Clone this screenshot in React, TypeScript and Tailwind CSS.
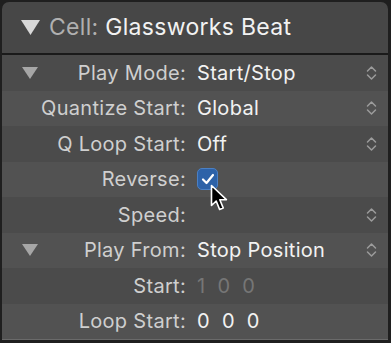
import React from 'react';

type Row = {
  label: string;
  value?: React.ReactNode;
  disclosure?: boolean;
  stepper?: boolean;
};

function Stepper() {
  return (
    <svg width="11" height="16" viewBox="0 0 11 16" className="shrink-0">
      <path d="M1.5 6 L5.5 2 L9.5 6" fill="none" stroke="#9c9c9c" strokeWidth="1.5" strokeLinecap="round" strokeLinejoin="round" />
      <path d="M1.5 10 L5.5 14 L9.5 10" fill="none" stroke="#9c9c9c" strokeWidth="1.5" strokeLinecap="round" strokeLinejoin="round" />
    </svg>
  );
}

function Triangle({ w, h, color }: { w: number; h: number; color: string }) {
  return (
    <svg width={w} height={h} viewBox={`0 0 ${w} ${h}`}>
      <path d={`M0 0 L${w} 0 L${w / 2} ${h} Z`} fill={color} />
    </svg>
  );
}

function Digits({ digits, dim }: { digits: string[]; dim?: boolean }) {
  return (
    <div className={`flex gap-[12px] ${dim ? 'text-[#767676]' : 'text-[#f2f2f2]'}`}>
      {digits.map((d, i) => (
        <span key={i}>{d}</span>
      ))}
    </div>
  );
}

function Checkbox() {
  return (
    <div className="relative">
      <div className="w-[21px] h-[22px] rounded-[5px] bg-[#2d62a8] border border-[#4b80c4] flex items-center justify-center">
        <svg width="14" height="12" viewBox="0 0 14 12">
          <path d="M2 6.5 L5.5 10 L12 2" fill="none" stroke="#fff" strokeWidth="2.2" strokeLinecap="round" strokeLinejoin="round" />
        </svg>
      </div>
      {/* pointer cursor */}
      <svg width="20" height="28" viewBox="0 0 20 28" className="absolute left-[13px] top-[16px]">
        <path
          d="M1.5 1.5 L1.5 21.5 L6.2 17 L9.6 25.4 L13.2 23.9 L9.8 15.7 L16.4 15.7 Z"
          fill="#000"
          stroke="#fff"
          strokeWidth="1.6"
          strokeLinejoin="round"
        />
      </svg>
    </div>
  );
}

const rows: Row[] = [
  { label: 'Play Mode:', value: 'Start/Stop', disclosure: true, stepper: true },
  { label: 'Quantize Start:', value: 'Global', stepper: true },
  { label: 'Q Loop Start:', value: 'Off', stepper: true },
  { label: 'Reverse:', value: <Checkbox /> },
  { label: 'Speed:', stepper: true },
  { label: 'Play From:', value: 'Stop Position', disclosure: true, stepper: true },
  { label: 'Start:', value: <Digits digits={['1', '0', '0']} dim /> },
  { label: 'Loop Start:', value: <Digits digits={['0', '0', '0']} /> },
];

export default function App() {
  return (
    <div
      className="w-[391px] h-[343px] bg-[#1f1f1f] pt-[2px] pl-[2px] pr-[3px] overflow-hidden"
      style={{ fontFamily: 'Inter, "Liberation Sans", sans-serif' }}
    >
      <div className="rounded-t-[7px] overflow-hidden">
        {/* HEADER */}
        <div className="h-[51px] bg-[#474747] flex items-center pl-[19px]">
          <Triangle w={19} h={15} color="#d8d8d8" />
          <div className="ml-[9px] text-[23px] leading-none tracking-[0.3px]">
            <span className="text-[#b0b0b0]">Cell:</span>{' '}
            <span className="text-[#f2f2f2]">Glassworks Beat</span>
          </div>
        </div>
        <div className="h-[2px] bg-[#1a1a1a]" />

        {/* ROWS */}
        <div className="border-b border-[#6a6a6a]">
          {rows.map((r, i) => (
            <div
              key={r.label}
              className={`h-[35.5px] flex items-center text-[20px] tracking-[0.3px] ${i % 2 === 0 ? 'bg-[#4b4b4b]' : 'bg-[#525252]'}`}
            >
              <div className="w-[184px] flex items-center shrink-0">
                <div className="w-[36px] pl-[20px] flex">
                  {r.disclosure && <Triangle w={16} h={12} color="#a6a6a6" />}
                </div>
                <div className="flex-1 text-right text-[#cfcfcf] whitespace-nowrap">{r.label}</div>
              </div>
              <div className="flex-1 pl-[11px] text-[#f2f2f2] whitespace-nowrap">{r.value}</div>
              <div className="w-[25px] pr-[11px] flex justify-end">{r.stepper && <Stepper />}</div>
            </div>
          ))}
        </div>
      </div>
    </div>
  );
}
